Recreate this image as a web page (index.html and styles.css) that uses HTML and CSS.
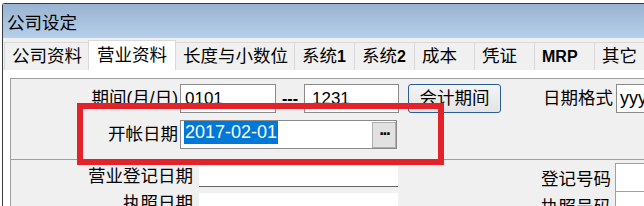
FILE: index.html
```html
<!DOCTYPE html>
<html lang="zh-CN">
<head>
<meta charset="utf-8">
<title>公司设定</title>
<link rel="stylesheet" href="styles.css">
</head>
<body>
<div class="screen">
  <div class="topstrip"></div>
  <div class="window">
    <div class="titlebar">公司设定</div>
    <div class="tabs">
      <div class="tab">公司资料</div>
      <div class="tab active">营业资料</div>
      <div class="tab">长度与小数位</div>
      <div class="tab">系统<b>1</b></div>
      <div class="tab">系统<b>2</b></div>
      <div class="tab">成本</div>
      <div class="tab">凭证</div>
      <div class="tab"><b>MRP</b></div>
      <div class="tab">其它</div>
    </div>
    <div class="page">
      <div class="group">
        <div class="row r1">
          <span class="lbl w1">期间(月/日)</span>
          <div class="input i-from">0101</div>
          <span class="dash">---</span>
          <div class="input i-to">1231</div>
          <div class="btn">会计期间</div>
          <span class="lbl fmt">日期格式</span>
          <div class="input i-fmt">yyyy</div>
        </div>
        <div class="row r2">
          <span class="lbl w1">开帐日期</span>
          <div class="input i-date">
            <span class="sel">2017-02-01</span>
            <span class="dots">···</span>
          </div>
        </div>
        <div class="divider"></div>
        <div class="cols">
          <div class="col-left">
            <div class="frow">
              <span class="flbl">营业登记日期</span>
              <div class="flat"></div>
            </div>
            <div class="frow">
              <span class="flbl">执照日期</span>
              <div class="flat"></div>
            </div>
          </div>
          <div class="col-right">
            <div class="rrow">
              <span class="rlbl">登记号码</span>
              <div class="rinput"></div>
            </div>
            <div class="rrow next">
              <span class="rlbl">执照号码</span>
              <div class="rinput"></div>
            </div>
          </div>
        </div>
      </div>
    </div>
  </div>
  <div class="annot"></div>
</div>
</body>
</html>
```

FILE: styles.css
```css
* { box-sizing: border-box; }

html, body {
  margin: 0;
  padding: 0;
  background: #fff;
}

body {
  font-family: "Liberation Sans", "Noto Sans CJK SC", sans-serif;
  color: #000;
}

.screen {
  position: relative;
  width: 644px;
  height: 206px;
  overflow: hidden;
}

.topstrip {
  height: 3px;
  background: #fff;
}

.window {
  margin-left: 2px;
  width: 720px;
  height: 240px;
  border-left: 1px solid #3a3a3a;
  border-top: 1px solid #3a3a3a;
  border-top-left-radius: 3px;
  background: #f0f0f0;
}

.titlebar {
  height: 34px;
  padding: 5px 0 0 4px;
  line-height: 29px;
  font-size: 17.5px;
  background: linear-gradient(#99b3d2, #b6cfea);
}

.tabs {
  height: 32px;
  display: flex;
  align-items: flex-end;
  padding-left: 1px;
  background: #f0f0f0;
}

.tab {
  height: 28px;
  min-width: 61px;
  padding: 0 6px 0 7px;
  margin-right: -1px;
  border: 1px solid #d9d9d9;
  border-bottom: none;
  background: #f0f0f0;
  font-size: 17.5px;
  line-height: 27px;
  white-space: nowrap;
}

.tab b {
  font-size: 16px;
}

.tab.active {
  height: 30px;
  padding: 0 8px;
  background: #fff;
  position: relative;
  z-index: 1;
  line-height: 29px;
}

.page {
  background: #fff;
  padding: 8px 0 0 7px;
  height: 200px;
}

.group {
  border-top: 1px solid #a0a0a0;
  border-left: 1px solid #a0a0a0;
  background: #f0f0f0;
  height: 200px;
}

.row {
  display: flex;
  align-items: center;
  height: 29px;
}

.r1 { margin-top: 5px; }
.r2 { margin-top: 7px; }

.lbl {
  font-size: 17.5px;
  line-height: 29px;
  white-space: nowrap;
}

.w1 {
  width: 167px;
  margin-right: 2px;
  text-align: right;
}

.input {
  height: 29px;
  border: 1px solid #8a8a8a;
  background: #fff;
  font-size: 17px;
  line-height: 27px;
  padding-left: 4px;
  white-space: nowrap;
  overflow: hidden;
}

.i-from { width: 96px; }

.dash {
  width: 28px;
  text-align: center;
  font-weight: bold;
  font-size: 16px;
  line-height: 29px;
}

.i-to {
  width: 95px;
  padding-left: 7px;
}

.btn {
  margin-left: 9px;
  width: 93px;
  height: 29px;
  border: 1px solid #2d5d98;
  border-radius: 3px;
  background: linear-gradient(#f4f4f4, #e4e4e4);
  font-size: 17.5px;
  line-height: 27px;
  text-align: center;
}

.fmt {
  margin-left: 42px;
  margin-right: 3px;
}

.i-fmt {
  width: 100px;
  font-size: 18px;
  padding-left: 3px;
}

.i-date {
  width: 217px;
  display: flex;
  align-items: flex-start;
  padding: 0 0 0 3px;
}

.sel {
  background: #0078d7;
  color: #fff;
  font-size: 18px;
  line-height: 23px;
  padding: 0 1px;
}

.dots {
  margin-left: auto;
  margin-top: 1px;
  width: 24px;
  height: 26px;
  border: 1px solid #adadad;
  background: #e1e1e1;
  font-size: 14px;
  font-weight: bold;
  line-height: 22px;
  text-align: center;
  letter-spacing: -2px;
  font-family: "DejaVu Sans", sans-serif;
}

.divider {
  margin-top: 10px;
  border-top: 1px solid #a0a0a0;
  margin-left: -1px;
}

.cols {
  display: flex;
}

.col-left {
  width: 387px;
  padding-top: 6px;
}

.frow {
  display: flex;
  align-items: center;
  height: 21px;
  margin-bottom: 6px;
}

.flbl {
  width: 182px;
  margin-right: 6px;
  text-align: right;
  font-size: 17.5px;
  line-height: 21px;
  white-space: nowrap;
}

.flat {
  width: 199px;
  height: 21px;
  background: #fff;
  border-bottom: 1px solid #646464;
}

.col-right {
  margin-left: 132px;
  padding-top: 3px;
}

.rrow {
  display: flex;
  align-items: center;
  height: 29px;
}

.rrow.next { margin-top: -1px; }

.rlbl {
  width: 81px;
  margin-right: 4px;
  margin-top: 4px;
  text-align: right;
  font-size: 17.5px;
  line-height: 29px;
  white-space: nowrap;
}

.rinput {
  width: 120px;
  height: 29px;
  background: #fff;
  border: 1px solid #a0a0a0;
}

.annot {
  position: absolute;
  left: 77px;
  top: 103px;
  width: 367px;
  height: 62px;
  border: 6px solid #e3222a;
}
```
